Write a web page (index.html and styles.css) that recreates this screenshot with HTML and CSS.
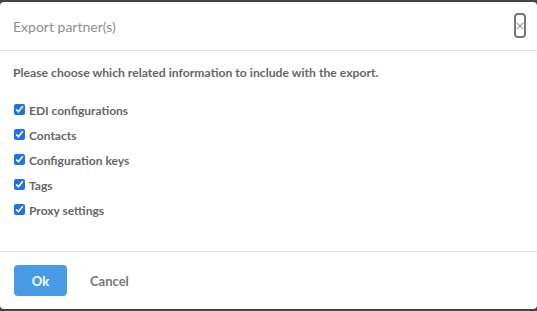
FILE: index.html
```html
<!DOCTYPE html>
<html>
<head>
<meta charset="utf-8">
<link rel="stylesheet" href="styles.css">
</head>
<body>
<div class="modal">
  <div class="modal-header">
    <h4 class="modal-title">Export partner(s)</h4>
    <button class="close" type="button">×</button>
  </div>
  <div class="modal-body">
    <p class="intro">Please choose which related information to include with the export.</p>
    <label class="check"><input type="checkbox" checked><span>EDI configurations</span></label>
    <label class="check"><input type="checkbox" checked><span>Contacts</span></label>
    <label class="check"><input type="checkbox" checked><span>Configuration keys</span></label>
    <label class="check"><input type="checkbox" checked><span>Tags</span></label>
    <label class="check"><input type="checkbox" checked><span>Proxy settings</span></label>
  </div>
  <div class="modal-footer">
    <button class="btn btn-primary" type="button">Ok</button>
    <button class="btn btn-link" type="button">Cancel</button>
  </div>
</div>
</body>
</html>
```
FILE: styles.css
```css
html, body {
  margin: 0;
  padding: 0;
  background: #444;
  height: 311px;
  overflow: hidden;
}
body {
  font-family: "Lato", "Noto Sans", sans-serif;
}
.modal {
  margin-top: 2px;
  height: 307px;
  background: #fff;
  border-radius: 4px;
  display: flex;
  flex-direction: column;
}
.modal-header {
  height: 48px;
  border-bottom: 1px solid #e5e5e5;
  display: flex;
  align-items: center;
  justify-content: space-between;
  padding: 0 11px 0 13px;
}
.modal-title {
  margin: 0;
  font-size: 14px;
  font-weight: 400;
  color: #8f8f8f;
}
.close {
  width: 12px;
  height: 25px;
  padding: 0;
  border: 2px solid #777;
  border-radius: 4px;
  background: #fff;
  color: #999;
  font-size: 13px;
  font-family: "DejaVu Sans", sans-serif;
  margin-top: -2px;
  display: flex;
  align-items: center;
  justify-content: center;
  overflow: hidden;
}
.modal-body {
  flex: 1;
  padding: 14px 13px;
  display: flex;
  flex-direction: column;
  align-items: flex-start;
}
.intro {
  margin: 0 0 18px;
  font-size: 12.2px;
  font-weight: 700;
  color: #666;
}
.check {
  display: flex;
  align-items: center;
  height: 25px;
  font-size: 12px;
  font-weight: 700;
  color: #666;
}
.check input {
  width: 11px;
  height: 11px;
  margin: 0 4px 3px 1px;
  accent-color: #1a73e8;
}
.modal-footer {
  height: 57px;
  border-top: 1px solid #e5e5e5;
  display: flex;
  align-items: center;
  padding: 0 14px;
  gap: 10px;
}
.btn {
  font-family: inherit;
  font-size: 13px;
  font-weight: 700;
  border: none;
  border-radius: 4px;
  height: 31px;
  cursor: pointer;
}
.btn-primary {
  width: 53px;
  background: #4a9be6;
  color: #fff;
}
.btn-link {
  background: transparent;
  color: #777;
  padding: 0 13px;
}
```
